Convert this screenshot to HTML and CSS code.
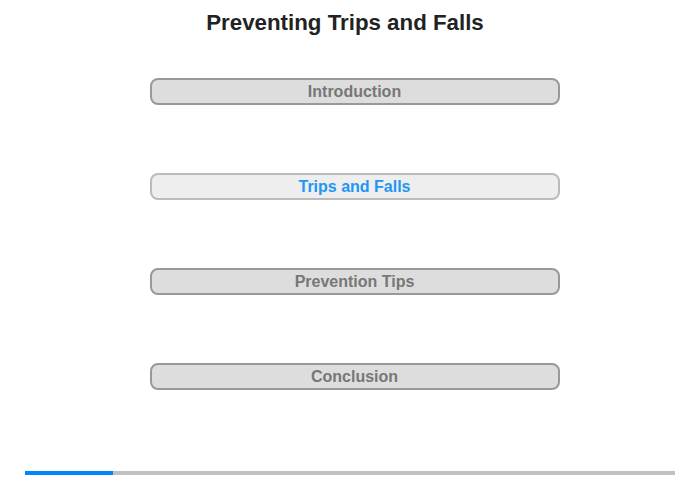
FILE: index.html
```html
<!DOCTYPE html>
<html>
<head>
<meta charset="utf-8">
<link rel="stylesheet" href="styles.css">
</head>
<body>
<div class="page">
  <h1 class="title">Preventing Trips and Falls</h1>
  <div class="menu">
    <div class="item">Introduction</div>
    <div class="item active">Trips and Falls</div>
    <div class="item">Prevention Tips</div>
    <div class="item">Conclusion</div>
  </div>
  <div class="progress"><div class="fill" style="width:13.5%"></div></div>
</div>
</body>
</html>
```
FILE: styles.css
```css
html, body { margin: 0; padding: 0; background: #fff; }
.page {
  width: 700px; height: 480px;
  display: flex; flex-direction: column; align-items: center;
  font-family: "Liberation Sans", Arial, sans-serif;
}
.title {
  margin: 10px 0 0; padding-right: 10px;
  font-size: 22.3px; line-height: 26px; font-weight: bold; color: #222;
}
.menu {
  margin-top: 42px; padding-left: 9px;
  display: flex; flex-direction: column; gap: 68px;
}
.item {
  width: 406px; height: 23px; line-height: 23px;
  border: 2px solid #999; border-radius: 8px;
  background: #ddd; color: #777;
  font-size: 16px; font-weight: bold; text-align: center;
}
.item.active { background: #eee; border-color: #bbb; color: #2196f3; }
.progress {
  margin-top: 81px; width: 650px; height: 4px; background: #c0c0c0;
}
.fill { height: 100%; background: #0084ff; }
```
